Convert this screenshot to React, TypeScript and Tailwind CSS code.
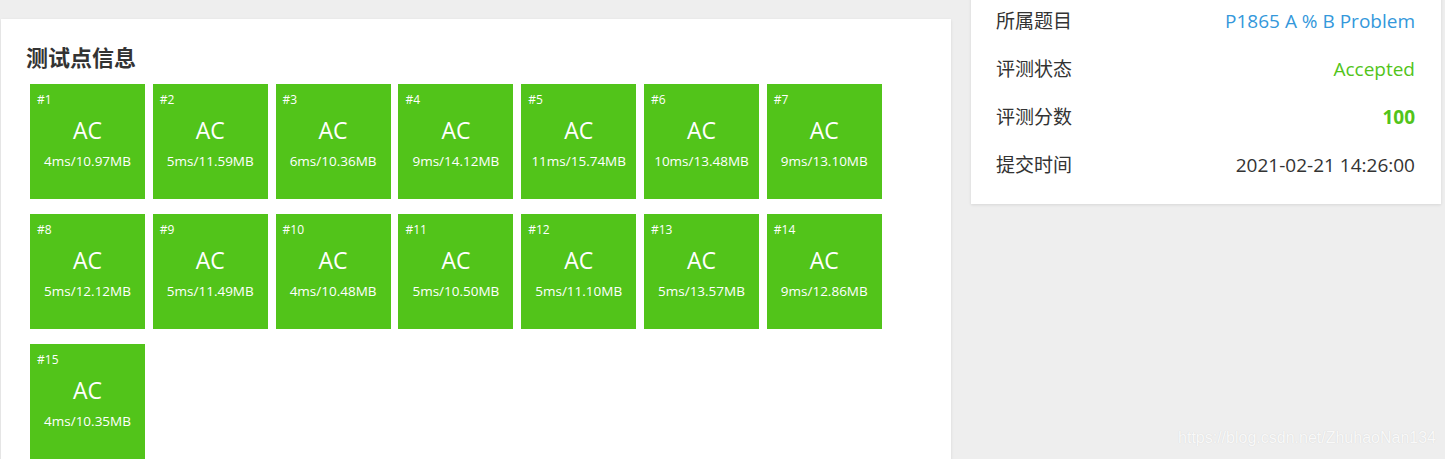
import React from 'react';

const cases = [
  '4ms/10.97MB', '5ms/11.59MB', '6ms/10.36MB', '9ms/14.12MB', '11ms/15.74MB', '10ms/13.48MB', '9ms/13.10MB',
  '5ms/12.12MB', '5ms/11.49MB', '4ms/10.48MB', '5ms/10.50MB', '5ms/11.10MB', '5ms/13.57MB', '9ms/12.86MB',
  '4ms/10.35MB',
];

const font = "font-['Open_Sans','Noto_Sans_CJK_SC',sans-serif]";

const TestCase = ({ id, stat }: { id: number; stat: string }) => (
  <div className="w-[115px] h-[115px] bg-[#52c41a] text-white flex flex-col">
    <div className="px-[7px] pt-[8px] text-[12px] leading-[16px]">#{id}</div>
    <div className="mt-[8px] text-center text-[23px] leading-[28px]">AC</div>
    <div className="mt-[8px] text-center text-[13.5px] leading-[18px]">{stat}</div>
  </div>
);

const InfoRow = ({ label, children }: { label: string; children: React.ReactNode }) => (
  <div className="h-[48px] flex items-center justify-between text-[19px]">
    <span className="text-[#333]">{label}</span>
    {children}
  </div>
);

export default function App() {
  return (
    <div className={`relative w-[1445px] h-[459px] overflow-hidden bg-[#eeeeee] ${font}`}>
      <div className="flex items-start pl-[1px] gap-[20px]">
        <div className="w-[950px] mt-[19px] bg-white shadow-[0_1px_3px_rgba(0,0,0,0.1)] px-[25px] pt-[23px] pb-[20px]">
          <h3 className="text-[22px] leading-[30px] font-bold text-[#333] mb-[12px]">测试点信息</h3>
          <div className="flex flex-wrap gap-x-[7.8px] gap-y-[15px] pl-[4px]">
            {cases.map((s, i) => (
              <TestCase key={i} id={i + 1} stat={s} />
            ))}
          </div>
        </div>
        <div className="w-[470px] -mt-[18px] bg-white shadow-[0_1px_3px_rgba(0,0,0,0.1)] pl-[25px] pr-[26px] py-[15px]">
          <InfoRow label="所属题目">
            <span className="text-[#3498db]">P1865 A % B Problem</span>
          </InfoRow>
          <InfoRow label="评测状态">
            <span className="text-[#52c41a]">Accepted</span>
          </InfoRow>
          <InfoRow label="评测分数">
            <span className="text-[#52c41a] font-bold">100</span>
          </InfoRow>
          <InfoRow label="提交时间">
            <span className="text-[#333]">2021-02-21 14:26:00</span>
          </InfoRow>
        </div>
      </div>
      <div className="absolute right-[9px] bottom-[9px] font-['Liberation_Sans',sans-serif] text-[16px] text-[#f9f9f9] [text-shadow:0_0_1px_#d0d0d0]">
        https://blog.csdn.net/ZhuhaoNan134
      </div>
    </div>
  );
}
